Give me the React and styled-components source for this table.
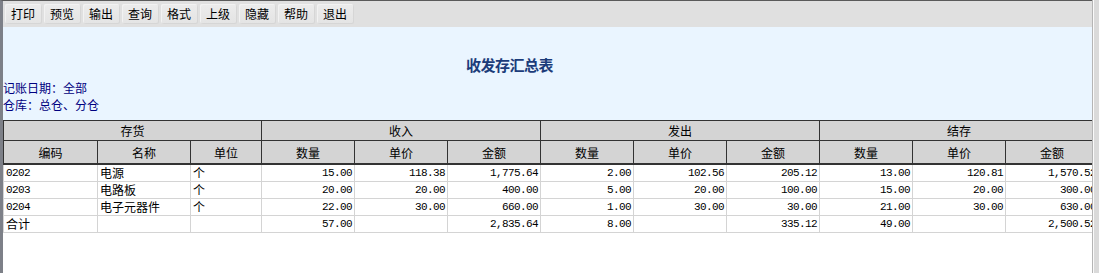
import React from 'react'
import styled, { createGlobalStyle } from 'styled-components'

const GlobalStyle = createGlobalStyle`
  html, body {
    margin: 0;
    padding: 0;
    background: #fff;
  }
  body {
    font-family: 'Noto Sans CJK SC', 'Liberation Sans', sans-serif;
    font-size: 12px;
    color: #000;
  }
`

const toolbarItems = ['打印', '预览', '输出', '查询', '格式', '上级', '隐藏', '帮助', '退出']

const columns = [
  { key: 'code', label: '编码', width: 94, align: 'left' },
  { key: 'name', label: '名称', width: 93, align: 'left', cjk: true },
  { key: 'unit', label: '单位', width: 71, align: 'left', cjk: true },
  { key: 'inQty', label: '数量', width: 93 },
  { key: 'inPrice', label: '单价', width: 93 },
  { key: 'inAmt', label: '金额', width: 93 },
  { key: 'outQty', label: '数量', width: 93 },
  { key: 'outPrice', label: '单价', width: 93 },
  { key: 'outAmt', label: '金额', width: 93 },
  { key: 'endQty', label: '数量', width: 93 },
  { key: 'endPrice', label: '单价', width: 93 },
  { key: 'endAmt', label: '金额', width: 93 },
]

const groups = [
  { label: '存货', span: 3 },
  { label: '收入', span: 3 },
  { label: '发出', span: 3 },
  { label: '结存', span: 3 },
]

const rows = [
  { code: '0202', name: '电源', unit: '个', inQty: '15.00', inPrice: '118.38', inAmt: '1,775.64', outQty: '2.00', outPrice: '102.56', outAmt: '205.12', endQty: '13.00', endPrice: '120.81', endAmt: '1,570.52' },
  { code: '0203', name: '电路板', unit: '个', inQty: '20.00', inPrice: '20.00', inAmt: '400.00', outQty: '5.00', outPrice: '20.00', outAmt: '100.00', endQty: '15.00', endPrice: '20.00', endAmt: '300.00' },
  { code: '0204', name: '电子元器件', unit: '个', inQty: '22.00', inPrice: '30.00', inAmt: '660.00', outQty: '1.00', outPrice: '30.00', outAmt: '30.00', endQty: '21.00', endPrice: '30.00', endAmt: '630.00' },
  { code: '合计', codeCjk: true, name: '', unit: '', inQty: '57.00', inPrice: '', inAmt: '2,835.64', outQty: '8.00', outPrice: '', outAmt: '335.12', endQty: '49.00', endPrice: '', endAmt: '2,500.52' },
]

const App = () => {
  return (
    <>
      <GlobalStyle />
      <Window>
        <Main>
          <Toolbar>
            {toolbarItems.map((item) => (
              <ToolButton key={item}>{item}</ToolButton>
            ))}
          </Toolbar>
          <ReportHead>
            <Title>收发存汇总表</Title>
            <Meta>记账日期：全部</Meta>
            <Meta>仓库：总仓、分仓</Meta>
          </ReportHead>
          <GridArea>
            <Table>
              <colgroup>
                {columns.map((c) => (
                  <col key={c.key} style={{ width: c.width }} />
                ))}
              </colgroup>
              <thead>
                <tr>
                  {groups.map((g) => (
                    <GroupCell key={g.label} colSpan={g.span}>
                      {g.label}
                    </GroupCell>
                  ))}
                </tr>
                <tr>
                  {columns.map((c) => (
                    <HeadCell key={c.key}>{c.label}</HeadCell>
                  ))}
                </tr>
              </thead>
              <tbody>
                {rows.map((r) => (
                  <tr key={r.code}>
                    {columns.map((c) => (
                      <Cell
                        key={c.key}
                        $align={c.align || 'right'}
                        $cjk={c.cjk || (c.key === 'code' && r.codeCjk)}
                      >
                        {r[c.key]}
                      </Cell>
                    ))}
                  </tr>
                ))}
              </tbody>
            </Table>
          </GridArea>
        </Main>
        <Gutter />
      </Window>
    </>
  )
}

const Window = styled.div`
  display: flex;
  width: 1099px;
  height: 273px;
  overflow: hidden;
`

const Main = styled.div`
  flex: 1;
  min-width: 0;
  display: flex;
  flex-direction: column;
  border-left: 3px solid #7d8088;
  border-top: 1px solid #5a5a5a;
`

const Toolbar = styled.div`
  display: flex;
  gap: 3px;
  height: 26px;
  padding: 3px 0 0 2px;
  box-sizing: border-box;
  background: #e0e0e0;
`

const ToolButton = styled.div`
  width: 36px;
  height: 19px;
  display: flex;
  align-items: center;
  justify-content: center;
  font-size: 12px;
  color: #000;
  background: linear-gradient(#ececec, #e4e4e4);
  border-radius: 2px;
  box-shadow: 1px 1px 0 #d6d6d6, inset 1px 1px 0 #f2f2f2;
`

const ReportHead = styled.div`
  background: #eaf5ff;
  padding: 27px 0 7px 0;
  color: #000080;
`

const Title = styled.div`
  text-align: center;
  padding-right: 76px;
  font-size: 15px;
  letter-spacing: -0.5px;
  font-weight: bold;
  line-height: 22px;
  color: #1c3c7a;
  margin-bottom: 3px;
`

const Meta = styled.div`
  font-size: 12px;
  line-height: 17px;
  color: #000080;
`

const GridArea = styled.div`
  flex: 1;
  background: #fff;
  overflow: hidden;
`

const Table = styled.table`
  border-collapse: collapse;
  table-layout: fixed;
  width: 1095px;
`

const GroupCell = styled.th`
  height: 19px;
  padding: 0;
  font-weight: normal;
  font-size: 12px;
  background: #d4d4d4;
  border: 1px solid #333;
  text-align: center;
`

const HeadCell = styled.th`
  height: 22px;
  padding: 0;
  font-weight: normal;
  font-size: 12px;
  background: #d4d4d4;
  border: 1px solid #333;
  border-bottom: 2px solid #333;
  text-align: center;
`

const Cell = styled.td`
  height: 16px;
  padding: 0 2px;
  border: 1px solid #d4d4d4;
  text-align: ${(p) => p.$align};
  font-family: ${(p) => (p.$cjk ? "'Noto Sans CJK SC', sans-serif" : "'Liberation Mono', monospace")};
  font-size: ${(p) => (p.$cjk ? '12px' : '11px')};
  letter-spacing: ${(p) => (p.$cjk ? '0' : '-0.6px')};
  line-height: 16px;
  white-space: nowrap;
  overflow: hidden;
  color: #000;
`

const Gutter = styled.div`
  width: 6px;
  background: #dadada;
  border-left: 1px solid #b5b5b5;
  box-shadow: inset 1px 0 0 #fafafa;
`

export default App
